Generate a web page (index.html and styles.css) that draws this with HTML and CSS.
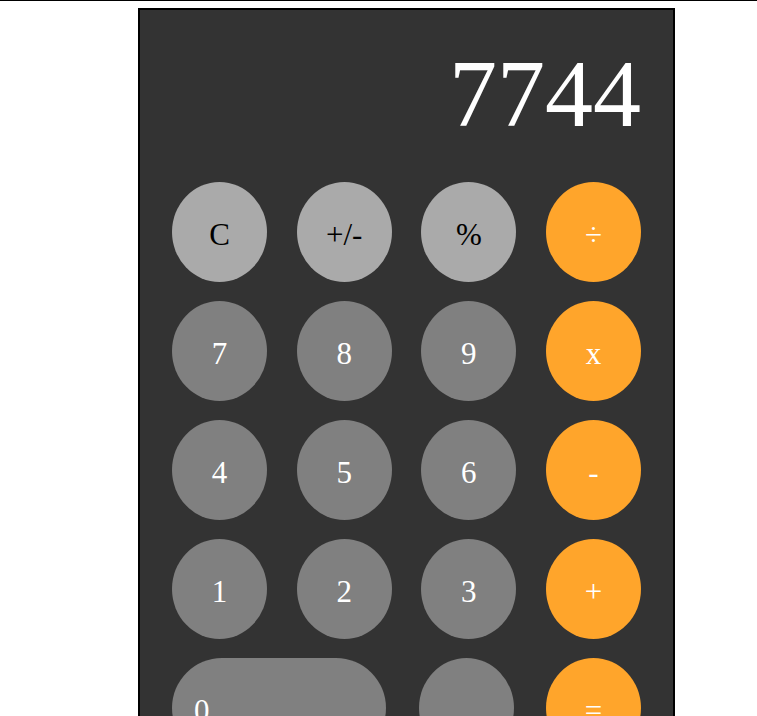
FILE: index.html
```html
<!DOCTYPE html>
<html>
<head>
<meta charset="utf-8">
<link rel="stylesheet" href="styles.css">
</head>
<body>
<div class="topline"></div>
<div class="calc">
  <div class="display">7744</div>
  <div class="keys">
    <div class="row">
      <button class="key light">C</button>
      <button class="key light">+/-</button>
      <button class="key light">%</button>
      <button class="key op">÷</button>
    </div>
    <div class="row">
      <button class="key">7</button>
      <button class="key">8</button>
      <button class="key">9</button>
      <button class="key op">x</button>
    </div>
    <div class="row">
      <button class="key">4</button>
      <button class="key">5</button>
      <button class="key">6</button>
      <button class="key op">-</button>
    </div>
    <div class="row">
      <button class="key">1</button>
      <button class="key">2</button>
      <button class="key">3</button>
      <button class="key op">+</button>
    </div>
    <div class="row">
      <button class="key zero">0</button>
      <button class="key">.</button>
      <button class="key op">=</button>
    </div>
  </div>
</div>
</body>
</html>
```
FILE: styles.css
```css
html, body {
  margin: 0;
  padding: 0;
  background: #fff;
  overflow: hidden;
}
.topline {
  height: 1px;
  background: #000;
}
.calc {
  margin: 7px 0 0 138px;
  width: 533px;
  border: 2px solid #000;
  background: #333333;
  font-family: "Liberation Serif", "Times New Roman", serif;
}
.display {
  color: #fff;
  font-size: 96px;
  text-align: right;
  padding: 28px 32px 33px 0;
  line-height: normal;
}
.keys {
  padding: 0 32px;
}
.row {
  display: flex;
  justify-content: space-between;
  margin-bottom: 19px;
}
.key {
  box-sizing: border-box;
  width: 95px;
  height: 100px;
  border: none;
  border-radius: 50%;
  background: #808080;
  color: #fff;
  font-family: "Liberation Serif", "Times New Roman", serif;
  font-size: 31px;
  padding: 5px 0 0 0;
  margin: 0;
  text-align: center;
}
.key.light {
  background: #aaaaaa;
  color: #000;
}
.key.op {
  background: #ffa52b;
  color: #fff;
}
.key.zero {
  width: 214px;
  border-radius: 50px;
  text-align: left;
  padding-left: 22px;
}
```
